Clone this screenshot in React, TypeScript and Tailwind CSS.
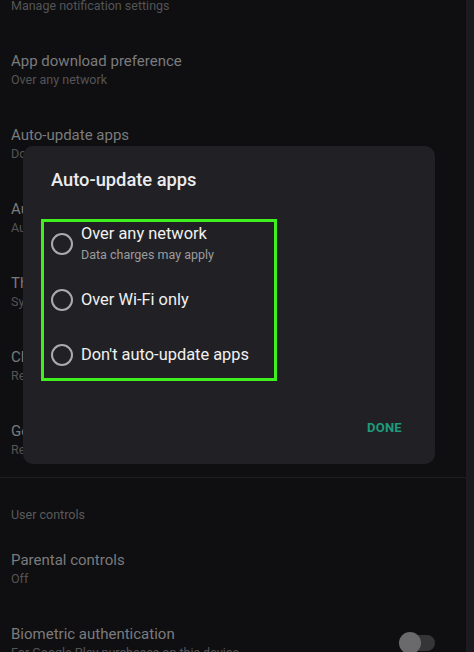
import React from 'react';

type Row = { title: string; sub: string };

const topRows: Row[] = [
    { title: "App download preference", sub: "Over any network" },
    { title: "Auto-update apps", sub: "Don't auto-update apps" },
    { title: "Auto-play videos", sub: "Auto-play videos over any network" },
    { title: "Theme", sub: "System default" },
    { title: "Clear device search history", sub: "Remove searches you have performed" },
    { title: "Google Play Instant", sub: "Related to instant apps" },
];

const options = ["Over Wi-Fi only", "Don't auto-update apps"];

const SettingRow = ({ title, sub, className = "" }: Row & { className?: string }) => (
    <div className={`h-[74px] shrink-0 flex flex-col justify-center px-[11px] ${className}`}>
        <div className="text-[15px] leading-[19px] text-[#7b7b7d]">{title}</div>
        <div className="text-[12.5px] leading-[17px] text-[#545456] whitespace-nowrap">{sub}</div>
    </div>
);

const Radio = () => (
    <div className="w-[22px] h-[22px] shrink-0 rounded-full border-2 border-[#ababab]" />
);

const App: React.FC = () => {
    return (
        <div className="relative w-[474px] h-[652px] overflow-hidden flex bg-[#0f0f11]" style={{ fontFamily: 'Roboto, "Noto Sans", sans-serif' }}>
            <div className="flex-1 flex flex-col">
                <SettingRow title="Notifications" sub="Manage notification settings" className="-mt-[41px]" />
                {topRows.map((r) => (
                    <SettingRow key={r.title} {...r} />
                ))}
                <div className="h-px shrink-0 bg-[#1d1d20]" />
                <div className="h-[54px] shrink-0 flex items-end px-[11px] pb-[9px] text-[12.5px] leading-[16px] text-[#5a5a5c]">
                    User controls
                </div>
                <SettingRow title="Parental controls" sub="Off" />
                <div className="relative">
                    <SettingRow title="Biometric authentication" sub="For Google Play purchases on this device" />
                    <div className="absolute left-[400px] top-[29px] w-[35px] h-[16px] rounded-full bg-[#353537]" />
                    <div className="absolute left-[399px] top-[26px] w-[22px] h-[22px] rounded-full bg-[#6a6a6c]" />
                </div>
            </div>
            <div className="w-[8px] shrink-0 bg-[#1b1b1f]" />

            <div className="absolute left-[23px] top-[146px] w-[412px] h-[318px] rounded-[10px] bg-[#212125] flex flex-col">
                <div className="pt-[24px] pl-[28px] text-[18.3px] leading-[20px] font-medium text-[#ececee]">
                    Auto-update apps
                </div>
                <div className="mt-[29px] ml-[18px] w-[236px] h-[162px] border-[3px] border-[#3ff01e] flex flex-col pl-[7px] pt-[2px]">
                    <div className="flex items-center gap-[8px] h-[39px]">
                        <Radio />
                        <div className="flex flex-col gap-[3px]">
                            <div className="text-[16.4px] leading-[20px] text-[#f1f1f1]">Over any network</div>
                            <div className="text-[12.5px] leading-[16px] text-[#9c9c9e]">Data charges may apply</div>
                        </div>
                    </div>
                    <div className="flex items-center gap-[8px] h-[22px] mt-[26px]">
                        <Radio />
                        <div className="text-[16.4px] leading-[20px] text-[#f1f1f1]">{options[0]}</div>
                    </div>
                    <div className="flex items-center gap-[8px] h-[22px] mt-[33px]">
                        <Radio />
                        <div className="text-[16.4px] leading-[20px] text-[#f1f1f1]">{options[1]}</div>
                    </div>
                </div>
                <div className="mt-[39px] flex justify-end pr-[33px]">
                    <span className="text-[13px] leading-[16px] font-bold tracking-[0.3px] text-[#1f9b7b]">DONE</span>
                </div>
            </div>
        </div>
    );
};

export default App;
